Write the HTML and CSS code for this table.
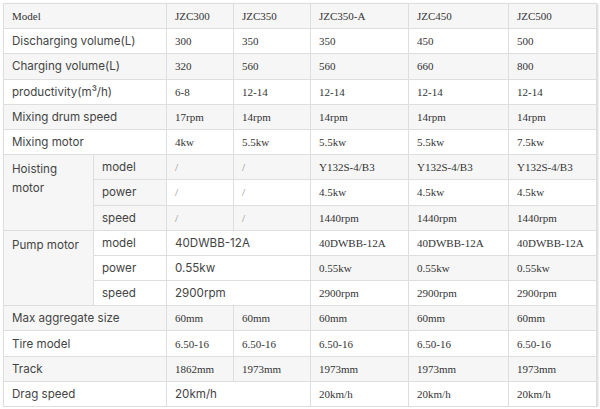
FILE: index.html
```html
<!DOCTYPE html>
<html>
<head>
<meta charset="utf-8">
<link rel="stylesheet" href="styles.css">
</head>
<body>
<div class="wrap">
<table class="spec">
  <colgroup>
    <col style="width:90px"><col style="width:73px"><col style="width:67px"><col style="width:77px"><col style="width:98px"><col style="width:100px"><col style="width:88px">
  </colgroup>
  <tr class="odd"><td colspan="2" class="serif">Model</td><td>JZC300</td><td>JZC350</td><td>JZC350-A</td><td>JZC450</td><td>JZC500</td></tr>
  <tr><td colspan="2" class="label">Discharging volume(L)</td><td>300</td><td>350</td><td>350</td><td>450</td><td>500</td></tr>
  <tr class="odd"><td colspan="2" class="label">Charging volume(L)</td><td>320</td><td>560</td><td>560</td><td>660</td><td>800</td></tr>
  <tr><td colspan="2" class="label">productivity(m³/h)</td><td>6-8</td><td>12-14</td><td>12-14</td><td>12-14</td><td>12-14</td></tr>
  <tr class="odd"><td colspan="2" class="label">Mixing drum speed</td><td>17rpm</td><td>14rpm</td><td>14rpm</td><td>14rpm</td><td>14rpm</td></tr>
  <tr><td colspan="2" class="label">Mixing motor</td><td>4kw</td><td>5.5kw</td><td>5.5kw</td><td>5.5kw</td><td>7.5kw</td></tr>
  <tr class="odd"><td rowspan="3" class="label top grey">Hoisting motor</td><td class="label grey">model</td><td class="slash">/</td><td class="slash">/</td><td>Y132S-4/B3</td><td>Y132S-4/B3</td><td>Y132S-4/B3</td></tr>
  <tr><td class="label grey">power</td><td class="slash">/</td><td class="slash">/</td><td>4.5kw</td><td>4.5kw</td><td>4.5kw</td></tr>
  <tr class="odd"><td class="label grey">speed</td><td class="slash">/</td><td class="slash">/</td><td>1440rpm</td><td>1440rpm</td><td>1440rpm</td></tr>
  <tr><td rowspan="3" class="label top grey">Pump motor</td><td class="label white">model</td><td colspan="2" class="label">40DWBB-12A</td><td>40DWBB-12A</td><td>40DWBB-12A</td><td>40DWBB-12A</td></tr>
  <tr class="odd"><td class="label white">power</td><td colspan="2" class="label white">0.55kw</td><td>0.55kw</td><td>0.55kw</td><td>0.55kw</td></tr>
  <tr><td class="label white">speed</td><td colspan="2" class="label">2900rpm</td><td>2900rpm</td><td>2900rpm</td><td>2900rpm</td></tr>
  <tr class="odd"><td colspan="2" class="label">Max aggregate size</td><td>60mm</td><td>60mm</td><td>60mm</td><td>60mm</td><td>60mm</td></tr>
  <tr><td colspan="2" class="label">Tire model</td><td>6.50-16</td><td>6.50-16</td><td>6.50-16</td><td>6.50-16</td><td>6.50-16</td></tr>
  <tr class="odd"><td colspan="2" class="label">Track</td><td>1862mm</td><td>1973mm</td><td>1973mm</td><td>1973mm</td><td>1973mm</td></tr>
  <tr><td colspan="2" class="label">Drag speed</td><td colspan="2" class="label">20km/h</td><td>20km/h</td><td>20km/h</td><td>20km/h</td></tr>
</table>
</div>
</body>
</html>
```
FILE: styles.css
```css
html, body {
  margin: 0;
  padding: 0;
  background: #ffffff;
}
.wrap {
  padding: 3px 0 0 3px;
}
.spec {
  border-collapse: collapse;
  table-layout: fixed;
  width: 593px;
  box-shadow: 1px 1px 2px rgba(0, 0, 0, 0.18);
  font-family: "Liberation Serif", "Times New Roman", serif;
  font-size: 11px;
  color: #333333;
}
.spec tr {
  height: 25.2px;
}
.spec td {
  border: 1px solid #dedede;
  padding: 0 8px;
  vertical-align: middle;
  white-space: nowrap;
  background: #ffffff;
}
.spec tr.odd td {
  background: #f6f6f6;
}
.spec td.label {
  font-family: "Inter", "Liberation Sans", sans-serif;
  font-size: 11.6px;
  color: #444444;
}
.spec td.top {
  vertical-align: top;
  padding-top: 5px;
  white-space: normal;
  line-height: 19px;
}
.spec td.grey,
.spec tr.odd td.grey {
  background: #f6f6f6;
}
.spec td.white,
.spec tr.odd td.white {
  background: #ffffff;
}
.spec td.slash {
  color: #888888;
}
```
